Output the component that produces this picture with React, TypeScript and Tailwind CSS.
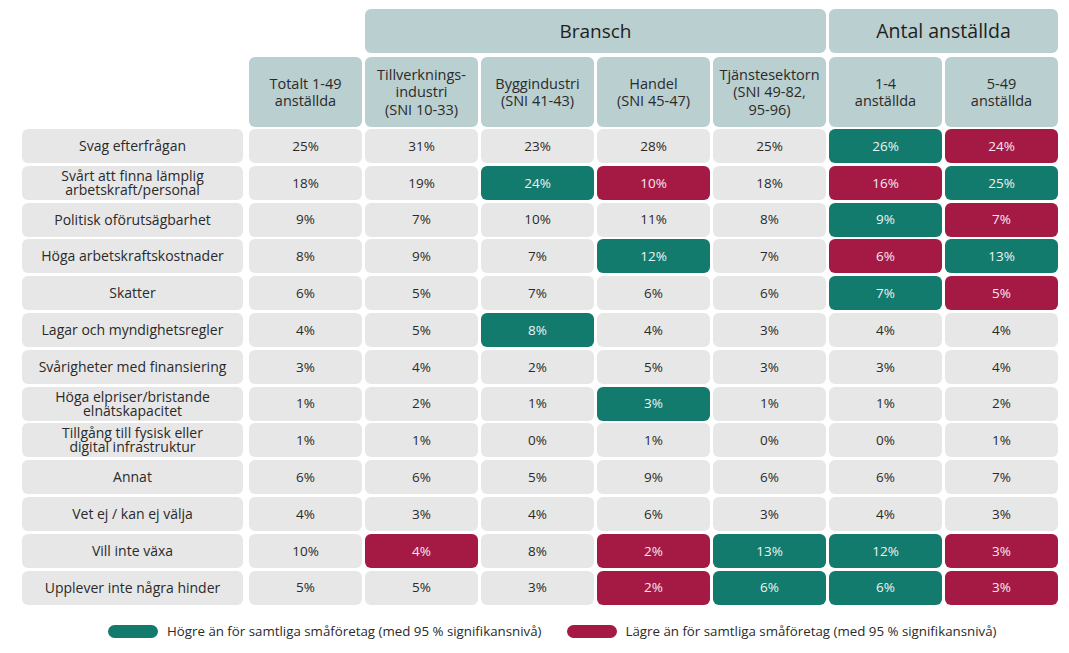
import React from 'react';

type Mark = '' | 'g' | 'r';

interface Row {
  label: string[];
  values: string[];
  marks: Mark[];
}

const rows: Row[] = [
  { label: ['Svag efterfrågan'], values: ['25%', '31%', '23%', '28%', '25%', '26%', '24%'], marks: ['', '', '', '', '', 'g', 'r'] },
  { label: ['Svårt att finna lämplig', 'arbetskraft/personal'], values: ['18%', '19%', '24%', '10%', '18%', '16%', '25%'], marks: ['', '', 'g', 'r', '', 'r', 'g'] },
  { label: ['Politisk oförutsägbarhet'], values: ['9%', '7%', '10%', '11%', '8%', '9%', '7%'], marks: ['', '', '', '', '', 'g', 'r'] },
  { label: ['Höga arbetskraftskostnader'], values: ['8%', '9%', '7%', '12%', '7%', '6%', '13%'], marks: ['', '', '', 'g', '', 'r', 'g'] },
  { label: ['Skatter'], values: ['6%', '5%', '7%', '6%', '6%', '7%', '5%'], marks: ['', '', '', '', '', 'g', 'r'] },
  { label: ['Lagar och myndighetsregler'], values: ['4%', '5%', '8%', '4%', '3%', '4%', '4%'], marks: ['', '', 'g', '', '', '', ''] },
  { label: ['Svårigheter med finansiering'], values: ['3%', '4%', '2%', '5%', '3%', '3%', '4%'], marks: ['', '', '', '', '', '', ''] },
  { label: ['Höga elpriser/bristande', 'elnätskapacitet'], values: ['1%', '2%', '1%', '3%', '1%', '1%', '2%'], marks: ['', '', '', 'g', '', '', ''] },
  { label: ['Tillgång till fysisk eller', 'digital infrastruktur'], values: ['1%', '1%', '0%', '1%', '0%', '0%', '1%'], marks: ['', '', '', '', '', '', ''] },
  { label: ['Annat'], values: ['6%', '6%', '5%', '9%', '6%', '6%', '7%'], marks: ['', '', '', '', '', '', ''] },
  { label: ['Vet ej / kan ej välja'], values: ['4%', '3%', '4%', '6%', '3%', '4%', '3%'], marks: ['', '', '', '', '', '', ''] },
  { label: ['Vill inte växa'], values: ['10%', '4%', '8%', '2%', '13%', '12%', '3%'], marks: ['', 'r', '', 'r', 'g', 'g', 'r'] },
  { label: ['Upplever inte några hinder'], values: ['5%', '5%', '3%', '2%', '6%', '6%', '3%'], marks: ['', '', '', 'r', 'g', 'g', 'r'] },
];

const subHeaders: string[][] = [
  ['Totalt 1-49', 'anställda'],
  ['Tillverknings-', 'industri', '(SNI 10-33)'],
  ['Byggindustri', '(SNI 41-43)'],
  ['Handel', '(SNI 45-47)'],
  ['Tjänstesektorn', '(SNI 49-82,', '95-96)'],
  ['1-4', 'anställda'],
  ['5-49', 'anställda'],
];

const cellClass = (m: Mark) => {
  if (m === 'g') return 'bg-[#137b6d] text-[#eef3f1]';
  if (m === 'r') return 'bg-[#a51a45] text-[#f6e9ee]';
  return 'bg-[#e7e7e7] text-[#2a2a2a]';
};

export default function App() {
  return (
    <div
      className="w-[1069px] h-[653px] bg-white pl-[22px] pt-[9px] text-[#222]"
      style={{ fontFamily: '"Open Sans", "Liberation Sans", sans-serif' }}
    >
      {/* Group headers */}
      <div className="grid grid-cols-[224px_repeat(7,113px)] gap-x-[3px] h-[44px]">
        <div className="col-span-2" />
        <div className="col-span-4 bg-[#bacfd0] rounded-md flex items-center justify-center text-[19px] text-[#1e1e1e]">
          Bransch
        </div>
        <div className="col-span-2 bg-[#bacfd0] rounded-md flex items-center justify-center text-[19.5px] text-[#1e1e1e]">
          Antal anställda
        </div>
      </div>

      {/* Sub headers */}
      <div className="grid grid-cols-[224px_repeat(7,113px)] gap-x-[3px] h-[70px] mt-[4px]">
        <div />
        {subHeaders.map((lines, i) => (
          <div
            key={i}
            className="bg-[#bacfd0] rounded-md flex flex-col items-center justify-center text-[14.5px] leading-[17.5px] text-[#2a2a2a] text-center"
          >
            {lines.map((l, j) => (
              <span key={j}>{l}</span>
            ))}
          </div>
        ))}
      </div>

      {/* Data rows */}
      <div className="flex flex-col gap-y-[2.8px] mt-[2px]">
        {rows.map((row, i) => (
          <div key={i} className="grid grid-cols-[224px_repeat(7,113px)] gap-x-[3px] h-[34px]">
            <div className="mr-[3px] bg-[#e7e7e7] rounded-md flex flex-col items-center justify-center text-[14px] leading-[14px] text-[#2a2a2a] text-center">
              {row.label.map((l, j) => (
                <span key={j}>{l}</span>
              ))}
            </div>
            {row.values.map((v, j) => (
              <div
                key={j}
                className={`rounded-md flex items-center justify-center text-[13.5px] ${cellClass(row.marks[j])}`}
              >
                {v}
              </div>
            ))}
          </div>
        ))}
      </div>

      {/* Legend */}
      <div className="flex items-center mt-[17px] text-[13.3px] text-[#2a2a2a]">
        <div className="ml-[86px] w-[50px] h-[13px] rounded-full bg-[#137b6d]" />
        <span className="ml-[9px]">Högre än för samtliga småföretag (med 95 % signifikansnivå)</span>
        <div className="ml-[26px] w-[50px] h-[13px] rounded-full bg-[#a51a45]" />
        <span className="ml-[8px]">Lägre än för samtliga småföretag (med 95 % signifikansnivå)</span>
      </div>
    </div>
  );
}
